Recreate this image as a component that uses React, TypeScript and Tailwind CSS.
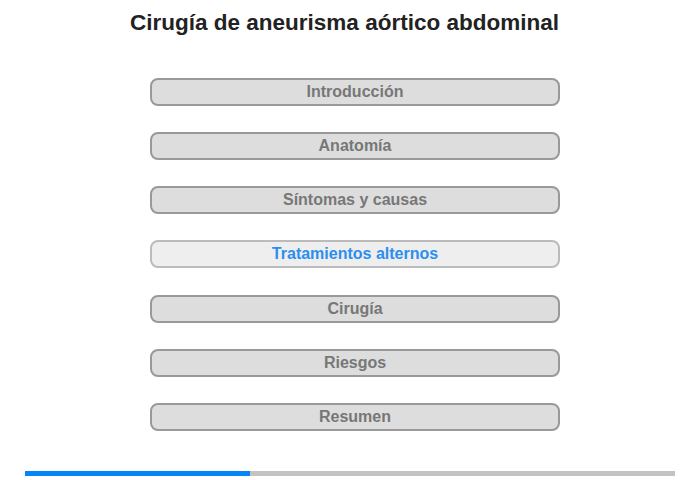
const sections = [
  'Introducción',
  'Anatomía',
  'Síntomas y causas',
  'Tratamientos alternos',
  'Cirugía',
  'Riesgos',
  'Resumen',
];

export default function App() {
  const current = 3;
  const progress = 225; // px of 650

  return (
    <div className="w-[700px] h-[480px] bg-white flex flex-col" style={{ fontFamily: '"Liberation Sans", Arial, sans-serif' }}>
      <h1 className="h-[44px] pt-[10px] pr-[11px] text-center text-[22.5px] leading-[26px] font-bold text-[#222]">
        Cirugía de aneurisma aórtico abdominal
      </h1>

      <div className="mt-[34px] ml-[150px] w-[410px] flex flex-col gap-[26.17px]">
        {sections.map((s, i) => (
          <button
            key={s}
            className={`h-[28px] rounded-[8px] border-2 text-[16px] font-bold leading-none ${
              i === current
                ? 'bg-[#eeeeee] border-[#bbbbbb] text-[#2b8ef0]'
                : 'bg-[#dddddd] border-[#999999] text-[#777777]'
            }`}
          >
            {s}
          </button>
        ))}
      </div>

      <div className="mt-[40px] ml-[25px] w-[650px] h-[5px] bg-[#c3c3c3] flex">
        <div className="h-full bg-[#0584f8]" style={{ width: progress }} />
      </div>
    </div>
  );
}
